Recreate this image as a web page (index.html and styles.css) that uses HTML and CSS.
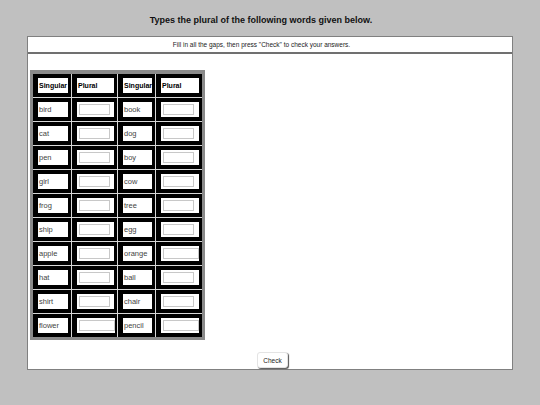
FILE: index.html
```html
<!DOCTYPE html>
<html>
<head>
<meta charset="utf-8">
<link rel="stylesheet" href="styles.css">
</head>
<body>
<h1 class="title">Types the plural of the following words given below.</h1>
<div class="main">
  <div class="instr">Fill in all the gaps, then press "Check" to check your answers.</div>
  <div class="content">
    <div class="grid">
      <div class="cell"><div class="box head">Singular</div></div>
      <div class="cell"><div class="box head">Plural</div></div>
      <div class="cell"><div class="box head">Singular</div></div>
      <div class="cell"><div class="box head">Plural</div></div>

      <div class="cell"><div class="box">bird</div></div>
      <div class="cell"><div class="box"><input class="gap" type="text"></div></div>
      <div class="cell"><div class="box">book</div></div>
      <div class="cell"><div class="box"><input class="gap" type="text"></div></div>

      <div class="cell"><div class="box">cat</div></div>
      <div class="cell"><div class="box"><input class="gap" type="text"></div></div>
      <div class="cell"><div class="box">dog</div></div>
      <div class="cell"><div class="box"><input class="gap" type="text"></div></div>

      <div class="cell"><div class="box">pen</div></div>
      <div class="cell"><div class="box"><input class="gap" type="text"></div></div>
      <div class="cell"><div class="box">boy</div></div>
      <div class="cell"><div class="box"><input class="gap" type="text"></div></div>

      <div class="cell"><div class="box">girl</div></div>
      <div class="cell"><div class="box"><input class="gap" type="text"></div></div>
      <div class="cell"><div class="box">cow</div></div>
      <div class="cell"><div class="box"><input class="gap" type="text"></div></div>

      <div class="cell"><div class="box">frog</div></div>
      <div class="cell"><div class="box"><input class="gap" type="text"></div></div>
      <div class="cell"><div class="box">tree</div></div>
      <div class="cell"><div class="box"><input class="gap" type="text"></div></div>

      <div class="cell"><div class="box">ship</div></div>
      <div class="cell"><div class="box"><input class="gap" type="text"></div></div>
      <div class="cell"><div class="box">egg</div></div>
      <div class="cell"><div class="box"><input class="gap" type="text"></div></div>

      <div class="cell"><div class="box">apple</div></div>
      <div class="cell"><div class="box"><input class="gap" type="text"></div></div>
      <div class="cell"><div class="box">orange</div></div>
      <div class="cell"><div class="box"><input class="gap wide" type="text"></div></div>

      <div class="cell"><div class="box">hat</div></div>
      <div class="cell"><div class="box"><input class="gap" type="text"></div></div>
      <div class="cell"><div class="box">ball</div></div>
      <div class="cell"><div class="box"><input class="gap" type="text"></div></div>

      <div class="cell"><div class="box">shirt</div></div>
      <div class="cell"><div class="box"><input class="gap" type="text"></div></div>
      <div class="cell"><div class="box">chair</div></div>
      <div class="cell"><div class="box"><input class="gap" type="text"></div></div>

      <div class="cell"><div class="box">flower</div></div>
      <div class="cell"><div class="box"><input class="gap wide" type="text"></div></div>
      <div class="cell"><div class="box">pencil</div></div>
      <div class="cell"><div class="box"><input class="gap wide" type="text"></div></div>
    </div>
    <div class="actions"><button class="check" type="button">Check</button></div>
  </div>
</div>
</body>
</html>
```
FILE: styles.css
```css
html, body {
  margin: 0;
  padding: 0;
  background: #c0c0c0;
  font-family: "Liberation Sans", Arial, sans-serif;
}

.title {
  margin: 0;
  padding: 15px 18px 0 0;
  height: 21px;
  text-align: center;
  font-size: 9px;
  font-weight: bold;
  color: #111;
  line-height: 11px;
}

.main {
  margin: 0 27px;
  height: 332px;
  background: #fff;
  border: 1px solid #808080;
  display: flex;
  flex-direction: column;
}

.instr {
  height: 15px;
  line-height: 15px;
  font-size: 6.5px;
  text-align: center;
  color: #222;
  padding-right: 17px;
  border-bottom: 2px solid #707070;
}

.content {
  flex: 1;
  display: flex;
  flex-direction: column;
  padding: 16px 0 0 2px;
}

.grid {
  align-self: flex-start;
  display: grid;
  grid-template-columns: 38px 45px 37px 46px;
  grid-auto-rows: 23px;
  gap: 1px;
  background: #d8d8d8;
  border: 3px solid #8a8a8a;
  border-top-width: 4px;
}

.cell {
  background: #000;
  padding: 4px 3px 4px 5px;
  display: flex;
}

.box {
  flex: 1;
  background: #fff;
  font-size: 7.5px;
  line-height: 15px;
  color: #444;
  padding-left: 1px;
  display: flex;
  align-items: center;
}

.head {
  font-size: 7px;
  font-weight: bold;
  color: #000;
}

.gap {
  box-sizing: border-box;
  width: 31px;
  height: 11px;
  margin: 0 0 0 1px;
  padding: 0;
  border: 1px solid #c8c8c8;
  background: #fff;
}

.gap.wide {
  width: 36px;
}

.actions {
  flex: 1;
  display: flex;
  justify-content: center;
  align-items: flex-end;
  padding-bottom: 1px;
}

.check {
  width: 31px;
  height: 16px;
  margin-left: 3px;
  padding: 0;
  font-family: "Liberation Sans", Arial, sans-serif;
  font-size: 6.5px;
  color: #222;
  background: #fff;
  border: 1px solid #e4e4e4;
  border-radius: 3px;
  box-shadow: 1px 1px 1px #555;
}
```
